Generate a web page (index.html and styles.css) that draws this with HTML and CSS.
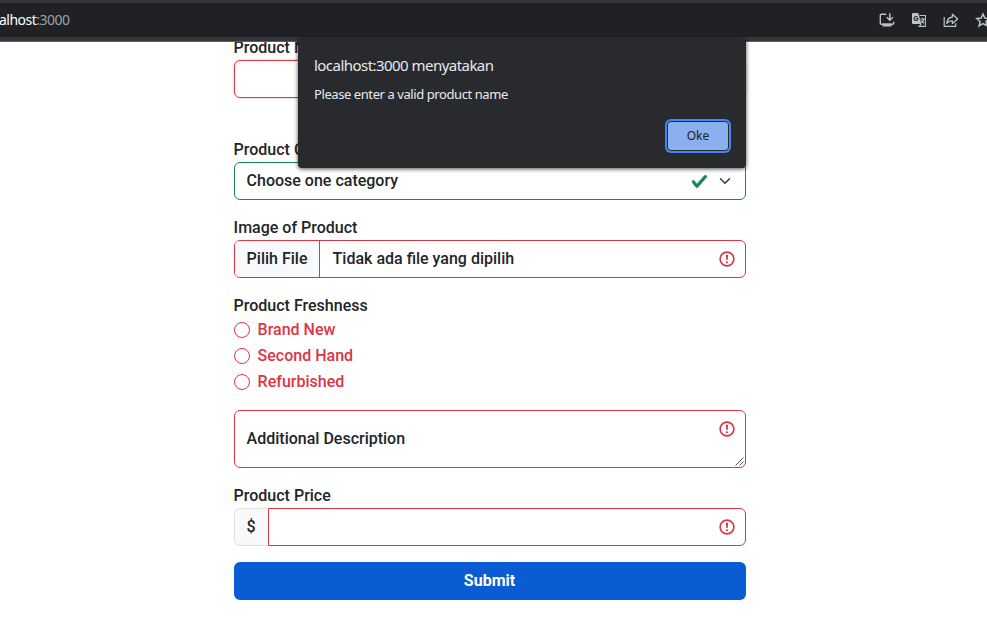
FILE: index.html
```html
<!DOCTYPE html>
<html lang="id">
<head>
<meta charset="utf-8">
<title>localhost:3000</title>
<link rel="stylesheet" href="styles.css">
</head>
<body>
<svg class="defs" width="0" height="0">
  <symbol id="alert" viewBox="0 0 16 16"><circle cx="8" cy="8" r="6.9" fill="none" stroke="#dc3545" stroke-width="1.6"/><path d="M6.9 3.8h2.2L8.7 9H7.3z" fill="#dc3545"/><circle cx="8" cy="11.2" r="1.05" fill="#dc3545"/></symbol>
</svg>
<header class="browser">
  <div class="address"><span class="host">alhost</span><span class="port">:3000</span></div>
  <div class="tools">
    <svg width="16" height="16" viewBox="0 0 16 16"><path d="M7.2 2.2H2.3a1 1 0 0 0-1 1v8a1 1 0 0 0 1 1h11.4a1 1 0 0 0 1-1V9.8" fill="none" stroke="#bdc1c6" stroke-width="1.4"/><path d="M3.5 11.6h9v2.9h-9z" fill="#bdc1c6"/><path d="M10.8 1.2v7M7.8 5.3l3 3 3-3" fill="none" stroke="#bdc1c6" stroke-width="1.5"/></svg>
    <svg width="16" height="16" viewBox="0 0 16 16"><path d="M2 1h5.2l3.2 11H2a1 1 0 0 1-1-1V2a1 1 0 0 1 1-1z" fill="#bdc1c6"/><path d="M7.3 6.6H5.2M7.1 6.6a2 2 0 1 1-.6-1.5" fill="none" stroke="#202124" stroke-width="1.1"/><path d="M8.5 3.5h5.9v10.9H8.2l2-2.2M9.5 7h4.2M11.4 6v1M12.8 7.3c-.4 1.7-1.3 2.8-2.4 3.6M10.4 8.2c.6 1.4 1.6 2.4 2.7 3.1" fill="none" stroke="#bdc1c6" stroke-width="1.1"/></svg>
    <svg width="16" height="16" viewBox="0 0 16 16"><path d="M1.2 5v9.3h11.5v-3" fill="none" stroke="#bdc1c6" stroke-width="1.2"/><path d="M9.4 2.2l5.3 4.7-5.3 4.5V8.8C6.8 8.8 5 9.6 3.7 11.3c.4-3.4 2.3-5.8 5.7-6.3z" fill="none" stroke="#bdc1c6" stroke-width="1.3" stroke-linejoin="round"/></svg>
    <svg width="16" height="16" viewBox="0 0 16 16"><path d="M8 2l1.8 4.1 4.5.4-3.4 3 1 4.4L8 11.6l-3.9 2.3 1-4.4-3.4-3 4.5-.4z" fill="none" stroke="#bdc1c6" stroke-width="1.5"/></svg>
  </div>
</header>
<main class="viewport">
  <form class="form">
    <div class="group name"><div class="label">Product Name</div><div class="control focused"></div></div>
    <div class="group"><div class="label">Product Category</div>
      <div class="control valid"><span>Choose one category</span>
        <svg class="check" width="17" height="17" viewBox="0 0 8 8"><path fill="#198754" stroke="#198754" stroke-width=".2" d="M2.3 6.73.6 4.53c-.4-1.04.46-1.4 1.1-.8l1.1 1.4 3.4-3.8c.6-.63 1.6-.27 1.2.7l-4 4.6c-.43.5-.8.4-1.1.1z"/></svg>
        <svg class="chevron" width="12" height="12" viewBox="0 0 16 16"><path d="m2 5 6 6 6-6" fill="none" stroke="#343a40" stroke-width="2" stroke-linecap="round" stroke-linejoin="round"/></svg>
      </div></div>
    <div class="group"><div class="label">Image of Product</div>
      <div class="control file"><span class="pick">Pilih File</span><span>Tidak ada file yang dipilih</span><svg class="alert"><use href="#alert"/></svg></div></div>
    <div class="group fresh"><div class="label">Product Freshness</div>
      <div class="option"><i></i>Brand New</div>
      <div class="option"><i></i>Second Hand</div>
      <div class="option"><i></i>Refurbished</div></div>
    <div class="group"><div class="control area"><span>Additional Description</span><svg class="alert"><use href="#alert"/></svg>
      <svg class="grip" width="9" height="9" viewBox="0 0 9 9"><path d="M.5 8.5l8-8M4.5 8.5l4-4" stroke="#555" fill="none"/></svg></div></div>
    <div class="group"><div class="label">Product Price</div>
      <div class="price"><span class="currency">$</span><div class="control amount"><svg class="alert"><use href="#alert"/></svg></div></div></div>
    <button type="button" class="submit">Submit</button>
  </form>
</main>
<section class="dialog">
  <div class="title">localhost:3000 menyatakan</div>
  <div class="message">Please enter a valid product name</div>
  <button type="button" class="ok">Oke</button>
</section>
</body>
</html>
```
FILE: styles.css
```css
* { box-sizing: border-box; }
body {
  margin: 0;
  height: 621px;
  display: flex;
  flex-direction: column;
  overflow: hidden;
  background: #fff;
  color: #212529;
  font: 500 16px/24px Roboto, sans-serif;
}
.defs { position: absolute; }
svg { flex: none; display: block; }
.browser {
  flex: none;
  height: 42px;
  display: flex;
  justify-content: space-between;
  align-items: center;
  background: #202124;
  border-top: 3px solid #35363a;
  border-bottom: 1px solid #5f6065;
  box-shadow: inset 0 -4px #35363a;
  padding-bottom: 4px;
  font: 400 14px/20px "Noto Sans", sans-serif;
}
.address { letter-spacing: -.52px; margin-left: -1px; }
.host { color: #fff; }
.port { color: #9aa0a6; }
.tools { display: flex; gap: 16px; margin-right: -4px; }
.viewport { flex: 1; overflow: hidden; }
.form { width: 512px; margin: -6px 0 0 234px; }
.group { margin-bottom: 16px; }
.name { margin-bottom: 40px; }
.label { height: 24px; margin-left: -.4px; }
.control {
  height: 38px;
  display: flex;
  align-items: center;
  border: 1px solid #dc3545;
  border-radius: 6px;
  padding: 0 10px 0 11.6px;
}
.focused { box-shadow: 0 0 3px rgba(220, 53, 69, .35); }
.valid { border-color: #198754; padding-right: 14px; }
.check { margin: 0 11px 0 auto; }
.alert { width: 16px; height: 16px; margin: 0 0 0 auto; }
.file { overflow: hidden; padding-left: 0; }
.file span { height: 36px; line-height: 36px; }
.pick {
  width: 85px;
  padding-left: 11.6px;
  margin-right: 12.6px;
  background: #f8f9fa;
  border-right: 1px solid #dc3545;
}
.fresh { margin-bottom: 14px; }
.option { height: 26px; display: flex; align-items: flex-start; color: #dc3545; line-height: 23px; }
.option i { width: 16px; height: 16px; border: 1px solid #dc3545; border-radius: 50%; margin: 4px 7.6px 0 0; }
.area { position: relative; height: 58px; }
.area .alert { align-self: flex-start; margin-top: 10px; }
.grip { position: absolute; right: 1px; bottom: 1px; }
.price { display: flex; }
.currency {
  width: 34px;
  height: 38px;
  line-height: 35px;
  padding-left: 11.6px;
  background: #f8f9fa;
  border: 1px solid #dee2e6;
  border-right: 0;
  border-radius: 6px 0 0 6px;
}
.amount { flex: 1; border-radius: 0 6px 6px 0; }
.submit {
  display: block;
  width: 100%;
  height: 38px;
  border: 0;
  border-radius: 6px;
  padding: 0 1px 0 0;
  background: #0b5cd3;
  color: #fff;
  font: 700 16px/24px Roboto, sans-serif;
}
.dialog {
  position: absolute;
  left: 298px;
  top: 38px;
  width: 448px;
  height: 130px;
  display: flex;
  flex-direction: column;
  padding: 16px;
  background: #292a2d;
  color: #e8eaed;
  border-radius: 4px;
  box-shadow: 0 1px 4px rgba(0, 0, 0, .7);
  font-family: "Noto Sans", sans-serif;
  font-weight: 400;
}
.title { font-size: 15px; line-height: 22px; letter-spacing: -.54px; }
.message { font-size: 13px; line-height: 20px; margin-top: 8px; letter-spacing: -.42px; }
.ok {
  width: 62px;
  height: 30px;
  margin: auto 1px 1px auto;
  padding: 0;
  border: 1px solid #292a2d;
  border-radius: 4px;
  background: #8ab0f0;
  box-shadow: 0 0 0 2px #4285f4;
  color: #202124;
  font: 400 12px/20px "Noto Sans", sans-serif;
}
```
